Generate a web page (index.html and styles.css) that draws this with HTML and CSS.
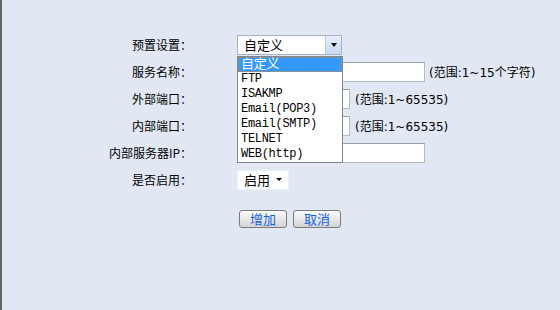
FILE: index.html
```html
<!DOCTYPE html>
<html lang="zh-CN">
<head>
<meta charset="utf-8">
<title>虚拟服务器</title>
<link rel="stylesheet" href="styles.css">
</head>
<body>
<div class="page">
  <div class="form">
    <div class="row">
      <span class="label">预置设置：</span>
      <div class="combo">
        <span class="combo-text">自定义</span>
        <span class="combo-btn"><span class="tri"></span></span>
        <ul class="listbox">
          <li class="sel">自定义</li>
          <li>FTP</li>
          <li>ISAKMP</li>
          <li>Email(POP3)</li>
          <li>Email(SMTP)</li>
          <li>TELNET</li>
          <li>WEB(http)</li>
        </ul>
      </div>
    </div>
    <div class="row">
      <span class="label">服务名称：</span>
      <input class="input w-long" type="text">
      <span class="hint hint-name">(范围:1~15个字符)</span>
    </div>
    <div class="row">
      <span class="label">外部端口：</span>
      <input class="input w-port" type="text">
      <span class="hint">(范围:1~65535)</span>
    </div>
    <div class="row">
      <span class="label">内部端口：</span>
      <input class="input w-port" type="text">
      <span class="hint">(范围:1~65535)</span>
    </div>
    <div class="row">
      <span class="label">内部服务器IP：</span>
      <input class="input w-long" type="text">
    </div>
    <div class="row">
      <span class="label">是否启用：</span>
      <div class="mini-select">
        <span>启用</span>
        <span class="tri tri-small"></span>
      </div>
    </div>
  </div>
  <div class="actions">
    <button class="btn" type="button">增加</button>
    <button class="btn" type="button">取消</button>
  </div>
</div>
</body>
</html>
```
FILE: styles.css
```css
html {
  background: #e1e8f4;
}
body {
  margin: 0;
  height: 310px;
  box-sizing: border-box;
  background: #e1e8f4;
  border-left: 2px solid #656565;
  font-family: "Noto Sans CJK SC", sans-serif;
  font-size: 12px;
  color: #000;
}
.page {
  padding-top: 31px;
}
.row {
  display: flex;
  align-items: center;
  height: 27px;
}
.label {
  flex: none;
  width: 190px;
  margin-right: 45px;
  text-align: right;
  white-space: nowrap;
}
.input {
  box-sizing: border-box;
  height: 20px;
  margin: 0;
  border: 1px solid #b3bac3;
  border-top-color: #979ea8;
  background: #fff;
  padding: 0 3px;
}
.w-long {
  width: 188px;
}
.w-port {
  width: 113px;
}
.hint {
  margin-left: 5px;
  font-family: "DejaVu Sans", "Noto Sans CJK SC", sans-serif;
  font-size: 12px;
  white-space: nowrap;
}
.hint-name {
  margin-left: 4px;
}
.combo {
  position: relative;
  box-sizing: border-box;
  width: 105px;
  height: 20px;
  display: flex;
  border: 1px solid #a9b3bf;
  background: #fff;
}
.combo-text {
  flex: 1;
  padding-left: 6px;
  font-size: 13px;
  line-height: 18px;
}
.combo-btn {
  width: 15px;
  display: flex;
  align-items: center;
  justify-content: center;
  background: linear-gradient(#e6f0fb, #c6daf2);
  border-left: 1px solid #b7c8dc;
}
.tri {
  width: 0;
  height: 0;
  border-left: 3.5px solid transparent;
  border-right: 3.5px solid transparent;
  border-top: 4px solid #000;
}
.tri-small {
  border-left-width: 3px;
  border-right-width: 3px;
  border-top-width: 3px;
}
.listbox {
  position: absolute;
  left: -1px;
  top: 20px;
  z-index: 5;
  box-sizing: border-box;
  width: 106px;
  margin: 0;
  padding: 0;
  list-style: none;
  border: 1px solid #7d8791;
  background: #fff;
  font-family: "Liberation Mono", "Noto Sans CJK SC", monospace;
  font-size: 12px;
  letter-spacing: -0.3px;
}
.listbox li {
  height: 15px;
  line-height: 15px;
  padding-left: 3px;
  white-space: nowrap;
}
.listbox li.sel {
  background: #3399ff;
  color: #fff;
  font-size: 13px;
  outline: 1px dotted #d9862f;
  outline-offset: -1px;
}
.mini-select {
  box-sizing: border-box;
  width: 52px;
  height: 20px;
  display: flex;
  align-items: center;
  justify-content: space-between;
  padding: 0 6px 0 6px;
  border: 1px solid #eef1f5;
  background: #fff;
  font-size: 13px;
}
.actions {
  display: flex;
  gap: 6px;
  padding-left: 237px;
  margin-top: 17px;
}
.btn {
  box-sizing: border-box;
  width: 48px;
  height: 18px;
  padding: 0;
  border: 1px solid #7b7b7b;
  border-radius: 3px;
  background: linear-gradient(#fbfbfb, #d4d4d4);
  color: #1463e6;
  font-family: "Noto Sans CJK SC", sans-serif;
  font-size: 13px;
  line-height: 16px;
}
```
